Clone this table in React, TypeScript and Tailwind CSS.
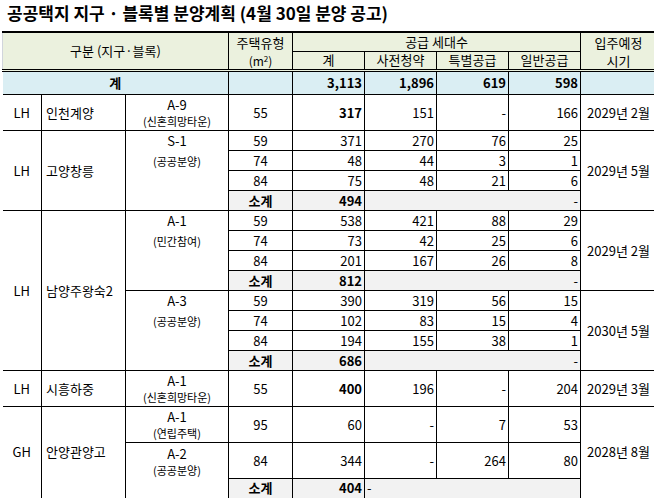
const cell = "border border-black px-[2px] py-0 text-[13px] leading-[16px] align-middle";
const num = cell + " text-right";
const ctr = cell + " text-center";
const sub = "bg-[#f2f2f2]";
const headLast = " font-normal border-b-[3px] border-b-black border-double";

type DataRow = { type: string; total: string; pre: string; special: string; general: string; bold?: boolean };

function Block({ code, label }: { code: string; label: string }) {
  return (
    <div className="flex flex-col items-center">
      <span className="text-[13px] leading-[20px]">{code}</span>
      <span className="text-[11px] leading-[20px]">{label}</span>
    </div>
  );
}

function Nums({ r }: { r: DataRow }) {
  return (
    <>
      <td className={ctr}>{r.type}</td>
      <td className={num + (r.bold ? " font-bold" : "")}>{r.total}</td>
      <td className={num}>{r.pre}</td>
      <td className={num}>{r.special}</td>
      <td className={num}>{r.general}</td>
    </>
  );
}

function Subtotal({ total, left }: { total: string; left?: boolean }) {
  return (
    <tr className="h-[20px]">
      <td className={ctr + " font-bold " + sub}>소계</td>
      <td className={num + " font-bold " + sub}>{total}</td>
      <td colSpan={3} className={(left ? cell + " text-left" : num) + " " + sub}>-</td>
    </tr>
  );
}

function Group({ org, name, code, label, rows, subtotal, date }: {
  org: string; name: string; code: string; label: string; rows: DataRow[]; subtotal: string; date: string;
}) {
  return (
    <>
      <tr className="h-[20px]">
        <td rowSpan={4} className={ctr + " border-l-0"}>{org}</td>
        <td rowSpan={4} className={cell + " pl-[4px]"}>{name}</td>
        <td rowSpan={4} className={cell + " align-top"}><Block code={code} label={label} /></td>
        <Nums r={rows[0]} />
        <td rowSpan={4} className={ctr + " whitespace-nowrap"}>{date}</td>
      </tr>
      {rows.slice(1).map((r) => (
        <tr key={r.type} className="h-[20px]"><Nums r={r} /></tr>
      ))}
      <Subtotal total={subtotal} />
    </>
  );
}

function Single({ org, name, code, label, r, date }: { org: string; name: string; code: string; label: string; r: DataRow; date: string }) {
  return (
    <tr className="h-[36px]">
      <td className={ctr + " border-l-0"}>{org}</td>
      <td className={cell + " pl-[4px]"}>{name}</td>
      <td className={ctr}>
        <div className="flex flex-col items-center">
          <span className="text-[13px] leading-[16px]">{code}</span>
          <span className="text-[11px] leading-[16px]">{label}</span>
        </div>
      </td>
      <Nums r={r} />
      <td className={ctr + " whitespace-nowrap"}>{date}</td>
    </tr>
  );
}

export default function App() {
  return (
    <div className="w-[654px] h-[498px] overflow-hidden bg-white text-black font-['Noto_Sans_CJK_KR','Malgun_Gothic',sans-serif]">
      <h1 className="h-[31px] pl-[7px] pt-[1px] text-[17px] font-bold leading-[24px] whitespace-nowrap">
        공공택지 지구 · 블록별 분양계획 (4월 30일 분양 공고)
      </h1>
      <table className="ml-[2px] w-[654px] table-fixed border-collapse border-t-2 border-b-2 border-black">
        <colgroup>
          <col className="w-[39px]" />
          <col className="w-[84px]" />
          <col className="w-[103px]" />
          <col className="w-[64px]" />
          <col className="w-[72px]" />
          <col className="w-[72px]" />
          <col className="w-[72px]" />
          <col className="w-[72px]" />
          <col className="w-[76px]" />
        </colgroup>
        <thead className="bg-[#ebf1de]">
          <tr className="h-[18px]">
            <th colSpan={3} rowSpan={2} className={ctr + headLast + " border-l border-l-gray-300"}>구분 (지구·블록)</th>
            <th rowSpan={2} className={ctr + headLast}>
              <div className="leading-[20px]">주택유형</div>
              <div className="leading-[16px] text-[12px]">(m<sup className="text-[8px]">2</sup>)</div>
            </th>
            <th colSpan={4} className={ctr + " font-normal"}>공급 세대수</th>
            <th rowSpan={2} className={ctr + headLast}>
              <div className="leading-[20px]">입주예정</div>
              <div className="leading-[16px]">시기</div>
            </th>
          </tr>
          <tr className="h-[18px]">
            <th className={ctr + headLast}>계</th>
            <th className={ctr + headLast}>사전청약</th>
            <th className={ctr + headLast}>특별공급</th>
            <th className={ctr + headLast}>일반공급</th>
          </tr>
        </thead>
        <tbody>
          <tr className="h-[24px] bg-[#daeef3] font-bold">
            <td colSpan={3} className={ctr + " border-l-0"}>계</td>
            <td className={cell}></td>
            <td className={num}>3,113</td>
            <td className={num}>1,896</td>
            <td className={num}>619</td>
            <td className={num}>598</td>
            <td className={cell}></td>
          </tr>
          <Single org="LH" name="인천계양" code="A-9" label="(신혼희망타운)" date="2029년 2월"
            r={{ type: "55", total: "317", pre: "151", special: "-", general: "166", bold: true }} />
          <Group org="LH" name="고양창릉" code="S-1" label="(공공분양)" date="2029년 5월" subtotal="494"
            rows={[
              { type: "59", total: "371", pre: "270", special: "76", general: "25" },
              { type: "74", total: "48", pre: "44", special: "3", general: "1" },
              { type: "84", total: "75", pre: "48", special: "21", general: "6" },
            ]} />
          <tr className="h-[20px]">
            <td rowSpan={8} className={ctr + " border-l-0"}>LH</td>
            <td rowSpan={8} className={cell + " pl-[4px]"}>남양주왕숙2</td>
            <td rowSpan={4} className={cell + " align-top"}><Block code="A-1" label="(민간참여)" /></td>
            <Nums r={{ type: "59", total: "538", pre: "421", special: "88", general: "29" }} />
            <td rowSpan={4} className={ctr + " whitespace-nowrap"}>2029년 2월</td>
          </tr>
          <tr className="h-[20px]"><Nums r={{ type: "74", total: "73", pre: "42", special: "25", general: "6" }} /></tr>
          <tr className="h-[20px]"><Nums r={{ type: "84", total: "201", pre: "167", special: "26", general: "8" }} /></tr>
          <Subtotal total="812" />
          <tr className="h-[20px]">
            <td rowSpan={4} className={cell + " align-top"}><Block code="A-3" label="(공공분양)" /></td>
            <Nums r={{ type: "59", total: "390", pre: "319", special: "56", general: "15" }} />
            <td rowSpan={4} className={ctr + " whitespace-nowrap"}>2030년 5월</td>
          </tr>
          <tr className="h-[20px]"><Nums r={{ type: "74", total: "102", pre: "83", special: "15", general: "4" }} /></tr>
          <tr className="h-[20px]"><Nums r={{ type: "84", total: "194", pre: "155", special: "38", general: "1" }} /></tr>
          <Subtotal total="686" />
          <Single org="LH" name="시흥하중" code="A-1" label="(신혼희망타운)" date="2029년 3월"
            r={{ type: "55", total: "400", pre: "196", special: "-", general: "204", bold: true }} />
          <tr className="h-[36px]">
            <td rowSpan={3} className={ctr + " border-l-0"}>GH</td>
            <td rowSpan={3} className={cell + " pl-[4px]"}>안양관양고</td>
            <td className={ctr}>
              <div className="flex flex-col items-center">
                <span className="text-[13px] leading-[17px]">A-1</span>
                <span className="text-[11px] leading-[17px]">(연립주택)</span>
              </div>
            </td>
            <Nums r={{ type: "95", total: "60", pre: "-", special: "7", general: "53" }} />
            <td rowSpan={3} className={ctr + " whitespace-nowrap"}>2028년 8월</td>
          </tr>
          <tr className="h-[36px]">
            <td rowSpan={2} className={cell + " align-top pt-[2px]"}>
              <div className="flex flex-col items-center">
                <span className="text-[13px] leading-[17px]">A-2</span>
                <span className="text-[11px] leading-[17px]">(공공분양)</span>
              </div>
            </td>
            <Nums r={{ type: "84", total: "344", pre: "-", special: "264", general: "80" }} />
          </tr>
          <Subtotal total="404" left />
        </tbody>
      </table>
    </div>
  );
}
